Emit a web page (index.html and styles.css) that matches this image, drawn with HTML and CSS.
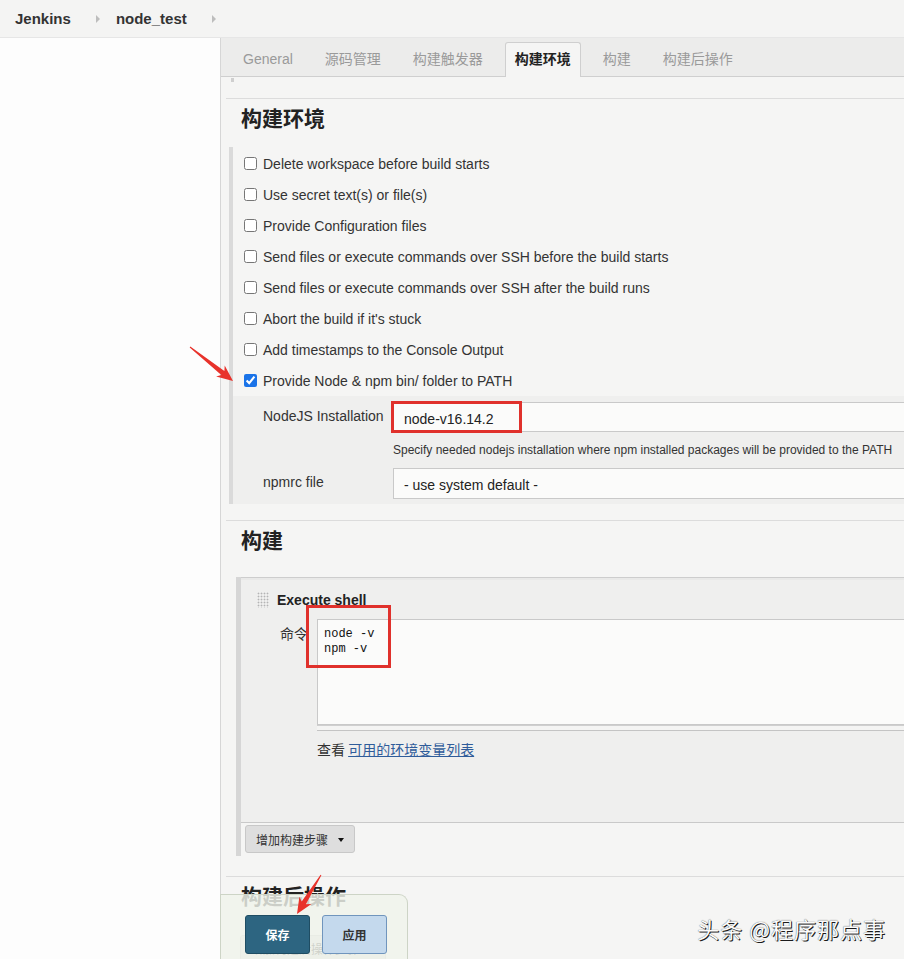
FILE: index.html
```html
<!DOCTYPE html>
<html lang="zh">
<head>
<meta charset="utf-8">
<title>node_test Config [Jenkins]</title>
<link rel="stylesheet" href="styles.css">
</head>
<body>
<header class="topbar">
  <span class="crumb">Jenkins</span><span class="chev"></span>
  <span class="crumb">node_test</span><span class="chev"></span>
</header>
<div class="layout">
  <aside class="sidebar"></aside>
  <main class="main">
    <nav class="tabs">
      <span class="tab">General</span>
      <span class="tab">源码管理</span>
      <span class="tab">构建触发器</span>
      <span class="tab active">构建环境</span>
      <span class="tab">构建</span>
      <span class="tab">构建后操作</span>
    </nav>
    <div class="grip-row"><span class="mini-grip"></span></div>

    <section class="section sec-env">
      <h2 class="sec-title">构建环境</h2>
      <div class="group">
        <label class="opt"><input type="checkbox"><span>Delete workspace before build starts</span></label>
        <label class="opt"><input type="checkbox"><span>Use secret text(s) or file(s)</span></label>
        <label class="opt"><input type="checkbox"><span>Provide Configuration files</span></label>
        <label class="opt"><input type="checkbox"><span>Send files or execute commands over SSH before the build starts</span></label>
        <label class="opt"><input type="checkbox"><span>Send files or execute commands over SSH after the build runs</span></label>
        <label class="opt"><input type="checkbox"><span>Abort the build if it's stuck</span></label>
        <label class="opt"><input type="checkbox"><span>Add timestamps to the Console Output</span></label>
        <label class="opt"><input type="checkbox" checked><span>Provide Node &amp; npm bin/ folder to PATH</span></label>
        <div class="nested">
          <div class="field-label">NodeJS Installation</div>
          <div class="field-value">
            <div class="input-box">node-v16.14.2</div>
            <span class="mark mark-input"></span>
          </div>
          <div class="help">Specify needed nodejs installation where npm installed packages will be provided to the PATH</div>
          <div class="field-label">npmrc file</div>
          <div class="field-value">
            <div class="input-box select-box">- use system default -</div>
          </div>
        </div>
      </div>
    </section>

    <section class="section sec-build">
      <h2 class="sec-title">构建</h2>
      <div class="steps">
        <div class="step">
          <div class="step-head"><span class="dots"></span><span class="step-name">Execute shell</span></div>
          <div class="cmd-row">
            <div class="cmd-label">命令</div>
            <div class="cmd-field">
              <div class="code">node -v
npm -v</div>
              <div class="handle"></div>
            </div>
          </div>
          <div class="env-link">查看 <a class="link">可用的环境变量列表</a></div>
          <span class="mark mark-code"></span>
        </div>
        <button class="add-btn">增加构建步骤 <span class="caret"></span></button>
      </div>
    </section>

    <section class="section sec-post">
      <h2 class="sec-title">构建后操作</h2>
      <button class="add-btn post-btn">增加构建后操作步骤 <span class="caret"></span></button>
    </section>
  </main>
</div>

<div class="bottom-bar">
  <button class="btn btn-save">保存</button>
  <button class="btn btn-apply">应用</button>
</div>

<div class="watermark">头条 @程序那点事</div>

<svg class="arrows" width="904" height="959" viewBox="0 0 904 959">
  <polygon fill="#e8322b" points="190.3,346.6 224.4,370.9 224.7,365.6 233,381 216.1,376.6 221.3,374.9 189.7,347.4"/>
  <polygon fill="#e8322b" points="321.4,875.3 305.9,904.2 311.4,904.1 297,914 299.4,896.7 301.7,901.6 320.6,874.7"/>
</svg>
</body>
</html>
```

FILE: styles.css
```css
* { box-sizing: border-box; }
html, body { margin: 0; padding: 0; }
body {
  width: 904px;
  height: 959px;
  overflow: hidden;
  background: #f5f5f4;
  font-family: "Liberation Sans", "Noto Sans CJK SC", sans-serif;
  font-size: 14px;
  color: #333;
  position: relative;
}

/* top breadcrumb bar */
.topbar {
  height: 38px;
  background: #f4f4f3;
  border-bottom: 1px solid #e6e6e6;
  display: flex;
  align-items: center;
  padding-left: 15px;
}
.crumb {
  font-weight: bold;
  font-size: 15px;
  color: #333;
}
.chev {
  width: 0;
  height: 0;
  border-left: 4px solid #bdbdbd;
  border-top: 4px solid transparent;
  border-bottom: 4px solid transparent;
  margin: 0 16px 0 25px;
}

.layout {
  display: flex;
  height: 921px;
}
.sidebar {
  width: 221px;
  flex: none;
  background: #fdfdfd;
  border-right: 1px solid #d6d6d6;
}
.main {
  flex: 1;
  min-width: 0;
  overflow: hidden;
  background: #f5f5f4;
}

/* tabs */
.tabs {
  height: 39px;
  background: #ececeb;
  border-bottom: 1px solid #cfcfcf;
  display: flex;
  align-items: flex-end;
  gap: 12px;
  padding-left: 12px;
}
.tab {
  height: 34px;
  line-height: 34px;
  padding: 0 10px;
  color: #9a9a9a;
  font-size: 14px;
}
.tab.active {
  height: 35px;
  margin-bottom: -1px;
  background: #f5f5f4;
  border: 1px solid #cfcfcf;
  border-bottom: none;
  border-radius: 3px 3px 0 0;
  color: #222;
  font-weight: bold;
  padding: 0 9px;
  line-height: 33px;
}

.grip-row {
  height: 21px;
  padding: 1px 0 0 10px;
}
.mini-grip {
  display: block;
  width: 3px;
  height: 4px;
  background: #cfcfcf;
}

/* sections */
.section {
  margin-left: 5px;
  border-top: 1px solid #dcdcdc;
}
.sec-title {
  margin: 0 0 8px 0;
  padding-left: 15px;
  height: 40px;
  line-height: 36px;
  font-size: 21px;
  font-weight: bold;
  color: #222;
  font-family: "Noto Sans CJK SC", "Liberation Sans", sans-serif;
}
.sec-env { padding-bottom: 16px; }

.group {
  margin-left: 3px;
  border-left: 4px solid #dadada;
  padding-top: 1px;
}
.opt {
  display: flex;
  align-items: center;
  height: 31px;
  padding-left: 11px;
}
.opt input {
  margin: 0;
  width: 13px;
  height: 13px;
  accent-color: #1a73e8;
}
.opt span {
  margin-left: 6px;
}

.nested {
  background: #efefee;
  padding: 6px 0 6px 30px;
  display: grid;
  grid-template-columns: 130px 1fr;
}
.field-label {
  padding-top: 5px;
  line-height: 18px;
  height: 30px;
}
.field-value {
  position: relative;
  height: 30px;
}
.input-box {
  width: 620px;
  height: 30px;
  line-height: 28px;
  padding-top: 2px;
  border: 1px solid #c9c9c9;
  background: #fbfbfa;
  padding-left: 10px;
  color: #222;
}
.select-box {
  height: 31px;
  line-height: 29px;
}
.help {
  grid-column: 2;
  height: 36px;
  padding-top: 10px;
  line-height: 16px;
  font-size: 12px;
  color: #333;
}
.mark {
  position: absolute;
  border: 3px solid #e0312c;
  pointer-events: none;
}
.mark-input {
  left: -2px;
  top: -1px;
  width: 131px;
  height: 32px;
}

/* build steps */
.sec-build .sec-title { margin-bottom: 16px; }
.steps {
  margin: 0 0 20px 10px;
  border-left: 5px solid #d6d6d6;
  padding-bottom: 3px;
}
.step {
  position: relative;
  background: #efefee;
  border-top: 1px solid #cdcdcd;
  border-bottom: 1px solid #c9c9c9;
  padding-bottom: 63px;
}
.step-head {
  height: 41px;
  display: flex;
  align-items: center;
  padding-left: 16px;
  padding-top: 1px;
  border-top: 2px solid #e9e9e8;
}
.dots {
  width: 12px;
  height: 16px;
  background: radial-gradient(circle, #b4b4b4 0.8px, transparent 1.1px) 0 0 / 3px 3px;
}
.step-name {
  margin-left: 8px;
  font-weight: bold;
  color: #222;
}
.cmd-row {
  display: flex;
}
.cmd-label {
  width: 76px;
  flex: none;
  text-align: right;
  padding: 4px 9px 0 0;
  line-height: 20px;
  font-family: "Noto Sans CJK SC", sans-serif;
}
.cmd-field {
  flex: none;
  width: 640px;
}
.code {
  height: 106px;
  border: 1px solid #c9c9c9;
  background: #fbfbfa;
  padding: 7px 6px;
  font-family: "Liberation Mono", monospace;
  font-size: 12px;
  line-height: 15px;
  white-space: pre;
  color: #111;
}
.handle {
  height: 6px;
  border-top: 1px solid #cfcfcf;
  border-bottom: 1px solid #c4c4c4;
  background: #f4f4f3;
}
.env-link {
  margin-top: 8px;
  padding-left: 76px;
  line-height: 20px;
  font-family: "Noto Sans CJK SC", sans-serif;
}
.link {
  color: #2f5c9a;
  text-decoration: underline;
}
.mark-code {
  left: 65px;
  top: 27px;
  width: 85px;
  height: 63px;
}

.add-btn {
  margin: 2px 0 0 4px;
  height: 28px;
  padding: 1px 10px 0;
  background: #dedede;
  border: 1px solid #c8c8c8;
  border-radius: 3px;
  font-family: "Noto Sans CJK SC", sans-serif;
  font-size: 12px;
  color: #333;
  display: inline-flex;
  align-items: center;
}
.caret {
  display: inline-block;
  margin-left: 10px;
  border-top: 4px solid #111;
  border-left: 3.5px solid transparent;
  border-right: 3.5px solid transparent;
}
.post-btn {
  margin: 10px 0 0 14px;
  height: 26px;
}

/* floating bottom bar */
.bottom-bar {
  position: absolute;
  left: 220px;
  bottom: 0;
  width: 188px;
  height: 65px;
  background: rgba(240, 244, 236, 0.82);
  border: 1px solid #cdd4c6;
  border-bottom: none;
  border-radius: 0 9px 0 0;
  display: flex;
  gap: 12px;
  padding: 20px 0 0 24px;
}
.btn {
  width: 65px;
  height: 39px;
  border-radius: 3px;
  font-family: "Noto Sans CJK SC", sans-serif;
  font-size: 12px;
  font-weight: bold;
}
.btn-save {
  background: #2d6581;
  border: 1px solid #1f4d63;
  color: #fff;
}
.btn-apply {
  background: #c4d9ed;
  border: 1px solid #7095bd;
  color: #333;
}

.watermark {
  position: absolute;
  top: 912px;
  right: 18px;
  font-family: "Noto Sans CJK SC", sans-serif;
  font-size: 22px;
  line-height: 32px;
  color: #fbfbfb;
  text-shadow: 1px 1px 0 #1a1a1a, 0 0 1px #333;
  letter-spacing: 1px;
}

.arrows {
  position: absolute;
  left: 0;
  top: 0;
  pointer-events: none;
}
```
